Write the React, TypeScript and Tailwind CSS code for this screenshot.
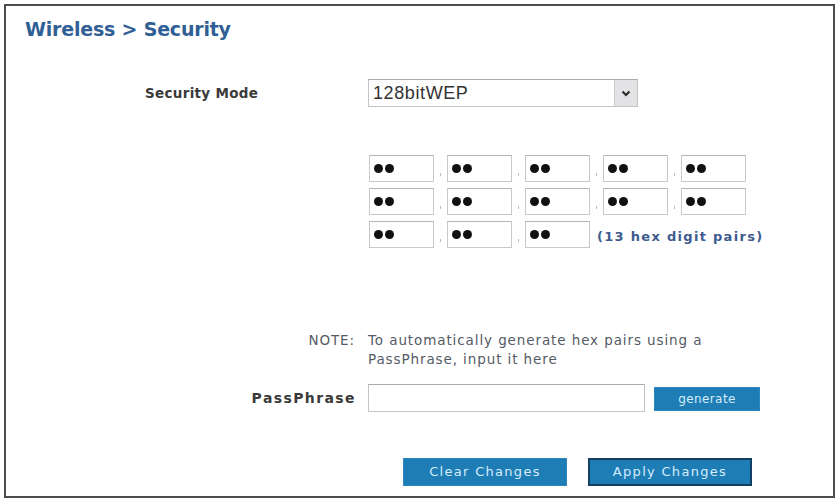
import React from 'react';

const hexRows = [5, 5, 3];

function HexBox() {
  return (
    <div className="w-[65px] h-[27px] border border-[#c9c9c9] border-t-[#b5b5b5] bg-white flex items-center pl-[4px] gap-[2px]">
      <span className="w-[9px] h-[9px] rounded-full bg-[#111]" />
      <span className="w-[9px] h-[9px] rounded-full bg-[#111]" />
    </div>
  );
}

function BlueButton({ label, dark, width, text }: { label: string; dark?: boolean; width: string; text: string }) {
  return (
    <button
      className={`${width} ${text} h-full bg-[#1f7db6] text-[#d4ecfb] border ${
        dark ? 'border-[#123f63] border-2' : 'border-[#2a86bd]'
      }`}
      style={{ fontFamily: '"DejaVu Sans", Verdana, sans-serif' }}
    >
      {label}
    </button>
  );
}

export default function App() {
  return (
    <div className="w-[837px] h-[501px] bg-white pt-[4px] pl-[4px]">
      <div
        className="w-[831px] h-[494px] border-2 border-[#4d4d4d] flex flex-col"
        style={{ fontFamily: '"DejaVu Sans", Verdana, sans-serif' }}
      >
        {/* title */}
        <div className="mt-[11px] pl-[19px] h-[24px] leading-[24px] text-[19px] font-bold text-[#2f5f95] tracking-[-0.2px]">
          Wireless &gt; Security
        </div>

        {/* security mode */}
        <div className="mt-[38px] flex items-center h-[28px]">
          <div className="w-[362px] pl-[139px] text-[13.5px] font-bold tracking-[0.3px] text-[#3a3a3a]">
            Security Mode
          </div>
          <div className="w-[270px] h-[28px] border border-[#c4c4c4] border-t-[#a9a9a9] flex items-center">
            <span
              className="flex-1 pl-[4px] text-[18px] text-[#333] tracking-[0.6px]"
              style={{ fontFamily: '"Liberation Sans", Arial, sans-serif' }}
            >
              128bitWEP
            </span>
            <span className="w-[23px] h-[26px] bg-[#e3e3e6] border-l border-[#c9c9cc] flex items-center justify-center">
              <svg width="10" height="7" viewBox="0 0 10 7">
                <path d="M1.5 1.5 L5 5 L8.5 1.5" fill="none" stroke="#2b2b2b" strokeWidth="2.2" />
              </svg>
            </span>
          </div>
        </div>

        {/* hex pairs */}
        <div className="mt-[48px] pl-[363px] flex flex-col gap-[6px]">
          {hexRows.map((count, r) => (
            <div key={r} className="flex items-center">
              {Array.from({ length: count }).map((_, i) => (
                <React.Fragment key={i}>
                  <HexBox />
                  {i < count - 1 && (
                    <span className="w-[13px] flex justify-center items-end h-[27px] pb-[6px]">
                      <span className="w-[1px] h-[3px] bg-[#bbb]" />
                    </span>
                  )}
                </React.Fragment>
              ))}
              {r === 2 && (
                <span className="ml-[7px] pt-[4px] text-[13px] tracking-[1.3px] font-bold text-[#3d5b8f]">
                  (13 hex digit pairs)
                </span>
              )}
            </div>
          ))}
        </div>

        {/* note */}
        <div className="mt-[83px] flex text-[13.5px] tracking-[0.9px] leading-[19px] text-[#555b66]">
          <div className="w-[362px] text-right pr-[13px]">NOTE:</div>
          <div>
            To automatically generate hex pairs using a
            <br />
            PassPhrase, input it here
          </div>
        </div>

        {/* passphrase */}
        <div className="mt-[15px] flex items-center">
          <div className="w-[362px] text-right pr-[12px] text-[14px] tracking-[1.4px] font-bold text-[#3a3a3a]">
            PassPhrase
          </div>
          <div className="w-[277px] h-[28px] border border-[#c4c4c4] border-t-[#a9a9a9] bg-white" />
          <div className="ml-[9px] h-[24px]">
            <BlueButton label="generate" width="w-[106px]" text="text-[12px] tracking-[0.4px]" />
          </div>
        </div>

        {/* actions */}
        <div className="mt-[46px] pl-[397px] h-[28px] flex gap-[21px]">
          <BlueButton label="Clear Changes" width="w-[164px]" text="text-[13px] tracking-[1.3px]" />
          <BlueButton label="Apply Changes" width="w-[164px]" text="text-[13px] tracking-[1.3px]" dark />
        </div>
      </div>
    </div>
  );
}
